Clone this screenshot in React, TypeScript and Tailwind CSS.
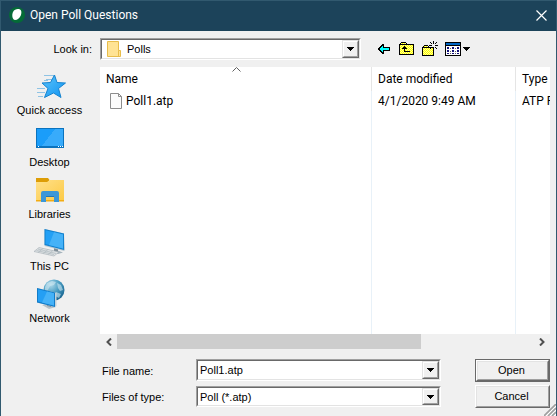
import type { ReactNode } from "react";

const sunken =
  "border border-t-[#a0a0a0] border-l-[#a0a0a0] border-r-white border-b-white";
const sunkenInner =
  "flex h-full items-stretch border border-t-[#696969] border-l-[#696969] border-r-[#e3e3e3] border-b-[#e3e3e3] bg-white";

function DropArrow() {
  return (
    <span
      aria-hidden="true"
      className="w-[17px] shrink-0 border border-t-[#e3e3e3] border-l-[#e3e3e3] border-r-[#696969] border-b-[#696969]"
    >
      <span className="flex h-full items-center justify-center border border-t-white border-l-white border-r-[#a0a0a0] border-b-[#a0a0a0] bg-[#f0f0f0]">
        <svg width="7" height="4" viewBox="0 0 7 4" shapeRendering="crispEdges">
          <path d="M0 0h7v1H6v1H5v1H4v1H3V3H2V2H1V1H0z" />
        </svg>
      </span>
    </span>
  );
}

function Combo({ children, className }: { children: ReactNode; className: string }) {
  return (
    <div className={`${sunken} ${className}`}>
      <div className={sunkenInner}>
        {children}
        <DropArrow />
      </div>
    </div>
  );
}

function StarIcon() {
  return (
    <svg width="32" height="32" viewBox="1 0 32 32">
      <defs>
        <linearGradient id="star" x1="0" y1="0" x2="1" y2="1">
          <stop offset="0" stopColor="#5cc4fa" />
          <stop offset="1" stopColor="#0f93f2" />
        </linearGradient>
      </defs>
      <path d="M11 4.500h10M13 8.500h6M4 17.500h8M4 21.500h8M11 9.500h4M5 25.500h5" stroke="#8fc3e4" strokeWidth="1" />
      <path d="M21.500 4l2.500 7.500 8.500.5-7 5.500 2.500 9-7.500-4.500-9 4.500 3.500-9L9 12l8.500-.5z" fill="url(#star)" stroke="#1583cf" strokeWidth="1" />
    </svg>
  );
}

function DesktopIcon() {
  return (
    <svg width="32" height="32" viewBox="0 0 32 32" shapeRendering="crispEdges">
      <rect x="2" y="5" width="28" height="20" fill="#0b73be" />
      <rect x="3" y="6" width="26" height="17" fill="#1a9dfa" />
      <path d="M21 6h8v17H8z" fill="#38abfb" />
      <path d="M4 23h1v1H4zM24 23h1v1h-1zM26 23h1v1h-1zM28 23h1v1h-1z" fill="#fff" />
    </svg>
  );
}

function LibrariesIcon() {
  return (
    <svg width="32" height="32" viewBox="0 0 32 32">
      <defs>
        <linearGradient id="lib" x1="0" y1="0" x2="1" y2="1">
          <stop offset="0" stopColor="#ffe08a" />
          <stop offset="1" stopColor="#fcca45" />
        </linearGradient>
      </defs>
      <path d="M2 3h12l1.500 2-2 3H2z" fill="#dd9d06" />
      <path d="M2 7h11l3-2h14v21H2z" fill="url(#lib)" />
      <path d="M2 25h28v1.500H2z" fill="#f3ac13" />
      <path d="M7 18q0-2 2-2h14q2 0 2 2v9h-5v-6h-8v6H7z" fill="#3b97d8" />
      <path d="M12 21h8v1h-8z" fill="#2375b4" />
    </svg>
  );
}

function ComputerIcon() {
  return (
    <svg width="32" height="32" viewBox="0 0 32 32">
      <path d="M14 22.500l5 1.500 3-1 3 1 4 1.500-5 1.500-7-2z" fill="#a5b4bd" />
      <path d="M20 20l4 1v4h-4z" fill="#7c8b95" />
      <path d="M10.500 2L30 6.500 31 23l-1 1-19.500-5z" fill="#b9c9d2" />
      <path d="M10.500 2L30 6.500V23l-19.500-5z" fill="#1382cf" />
      <path d="M11.500 3.300L29 7.400v14.200l-17.500-4.500z" fill="#23a0f5" />
      <path d="M20 5.300l9 2.100v14.200l-14-3.600z" fill="#45b2f8" />
      <path d="M5 20.500l20 4.500-5 4L0 24.500z" fill="#dfe3e5" stroke="#a2adb4" strokeWidth=".6" />
      <path d="M4 22l18 4.500M2.500 23.500L20 27.500M9 21.500l-5 4M14 22.500l-5 4M19 23.500l-5 4" stroke="#b3bcc1" strokeWidth=".8" />
    </svg>
  );
}

function NetworkIcon() {
  return (
    <svg width="32" height="32" viewBox="0 0 32 32">
      <defs>
        <radialGradient id="globe" cx=".35" cy=".25" r=".8">
          <stop offset="0" stopColor="#b0d9e9" />
          <stop offset=".5" stopColor="#4c9fc4" />
          <stop offset="1" stopColor="#17638f" />
        </radialGradient>
      </defs>
      <circle cx="20" cy="11" r="10.500" fill="url(#globe)" />
      <path d="M13 4l5-2 4 1-2 3-4 1-2 4-3 1 0-4zM23 4l4 2 2 5-3 1-2-3zM22 13l5 2-2 4-4-2z" fill="#cfe8f1" opacity=".6" />
      <path d="M8 26l6-1 8 3-7 2z" fill="#b7c2c9" />
      <path d="M13 23l4 1v4l-4-1z" fill="#82929c" />
      <path d="M3 9l18 4.500 1.500.5v13L21 28 3 23.500z" fill="#c3d0d7" />
      <path d="M3 9l18 4.500V28L3 23.500z" fill="#127cc8" />
      <path d="M4 10.300l16 4v12.300l-16-4z" fill="#249ff4" />
      <path d="M13 12.500l7 1.800v12.300L8 23.600z" fill="#45b2f8" />
    </svg>
  );
}

const places = [
  { name: "Quick access", icon: <StarIcon /> },
  { name: "Desktop", icon: <DesktopIcon /> },
  { name: "Libraries", icon: <LibrariesIcon /> },
  { name: "This PC", icon: <ComputerIcon /> },
  { name: "Network", icon: <NetworkIcon /> },
];

function Toolbar() {
  return (
    <div className="flex items-center gap-[7px] pl-[15px]">
      <button type="button" aria-label="Back">
        <svg width="16" height="16" viewBox="0 0 16 16" shapeRendering="crispEdges">
          <path d="M6 3h2v3h6v4H8v3H6v-1H5v-1H4v-1H3V9H2V7h1V6h1V5h1V4h1z" fill="#000" />
          <path d="M6 5h1v2h6v2H7v2H6v-1H5V9H4V7h1V6h1z" fill="#00ffff" />
        </svg>
      </button>
      <button type="button" aria-label="Up one level">
        <svg width="16" height="16" viewBox="0 0 16 16" shapeRendering="crispEdges">
          <defs>
            <pattern id="dither" width="2" height="2" patternUnits="userSpaceOnUse">
              <rect width="2" height="2" fill="#ffff00" />
              <path d="M0 0h1v1H0zM1 1h1v1H1z" fill="#ffff9a" />
            </pattern>
          </defs>
          <path d="M2 1h5v1h1v1h7v11H0V3h1V2h1z" fill="#000" />
          <path d="M2 2h5v1H2zM1 4h13v9H1z" fill="url(#dither)" />
          <path d="M5 5h1v1h1v1h1v1H6v2h5v1H5V8H3V7h1V6h1z" fill="#000" />
        </svg>
      </button>
      <button type="button" aria-label="Create new folder">
        <svg width="16" height="16" viewBox="0 0 16 16" shapeRendering="crispEdges">
          <path d="M2 4h4v1h1v1h5v9H0V6h1V5h1z" fill="#000" />
          <path d="M2 5h4v1H2zM1 7h10v7H1z" fill="url(#dither)" />
          <path d="M11 0h1v3h-1zM11 7h1v3h-1zM7 4h3v1H7zM13 4h3v1h-3zM8 1h1v1H8zM9 2h1v1H9zM14 1h1v1h-1zM13 2h1v1h-1zM9 6h1v1H9zM8 7h1v1H8zM13 6h1v1h-1zM14 7h1v1h-1z" fill="#000" />
        </svg>
      </button>
      <button type="button" aria-label="View menu">
        <svg width="25" height="16" viewBox="0 0 25 16" shapeRendering="crispEdges">
          <rect y="1" width="16" height="14" fill="#000" />
          <rect x="1" y="2" width="14" height="2" fill="#0065c4" />
          <rect x="1" y="5" width="14" height="9" fill="#fff" />
          <path d="M2 6h2v2H2zM7 6h2v2H7zM12 6h2v2h-2zM2 9h2v2H2zM7 9h2v2H7zM12 9h2v2h-2zM2 12h2v1H2zM7 12h2v1H7zM12 12h2v1h-2z" fill="#101078" />
          <path d="M5 7h1v1H5zM10 7h1v1h-1zM5 10h1v1H5zM10 10h1v1h-1zM5 12h1v1H5zM10 12h1v1h-1z" fill="#606060" />
          <path d="M18 6h7v1h-1v1h-1v1h-1v1h-1V9h-1V8h-1V7h-1z" fill="#000" />
        </svg>
      </button>
    </div>
  );
}

function FileTable() {
  const head = "h-6 border-r border-[#e5e5e5] p-0 pl-1.5 text-left font-normal";
  const cell = "h-5 border-r border-[#e8f1f8] p-0 pl-1.5";
  return (
    <table className="w-full table-fixed border-separate border-spacing-0 overflow-hidden font-[Roboto,'Liberation_Sans',sans-serif] text-xs leading-4 whitespace-nowrap">
      <colgroup>
        <col className="w-[272px]" />
        <col className="w-36" />
        <col />
      </colgroup>
      <thead>
        <tr>
          <th className={`${head} relative`}>
            Name
            <svg className="absolute top-0 left-1/2 -translate-x-1" width="9" height="5" viewBox="0 0 9 5">
              <path d="M.5 4.500l4-4 4 4" fill="none" stroke="#606060" />
            </svg>
          </th>
          <th className={head}>Date modified</th>
          <th className="p-0 pl-1.5 text-left font-normal">Type</th>
        </tr>
      </thead>
      <tbody>
        <tr>
          <td className={cell}>
            <span className="flex items-center gap-1 pl-1">
              <svg width="12" height="16" viewBox="0 0 12 16">
                <path d="M.5.5h8l3 3v12H.5z" fill="#fbfbfb" stroke="#8c8c8c" />
                <path d="M8.500.5v3h3" fill="none" stroke="#8c8c8c" />
              </svg>
              Poll1.atp
            </span>
          </td>
          <td className={cell}>4/1/2020 9:49 AM</td>
          <td className="overflow-hidden p-0 pl-1.5 text-clip">ATP File</td>
        </tr>
        <tr aria-hidden="true">
          <td className="border-r border-[#e8f1f8] p-0" />
          <td className="border-r border-[#e8f1f8] p-0" />
          <td className="p-0" />
        </tr>
      </tbody>
    </table>
  );
}

export default function App() {
  const field =
    "min-w-0 flex-1 appearance-none bg-white p-0 pl-0.5 leading-4 text-black outline-none";
  return (
    <div className="flex min-h-screen flex-col bg-[#f0f0f0] font-['Liberation_Sans',Arial,sans-serif] text-[11px] leading-[14px] text-black">
      <header className="flex h-[31px] items-center border border-b-0 border-[#31596f] bg-[#1c435a] pr-[9px] pb-0.5 pl-2 text-white">
        <svg width="16" height="16" viewBox="0 0 16 16">
          <circle cx="8" cy="8" r="8" fill="#056b37" />
          <path d="M4 5C5.500 2 9 1.500 11 2.500s1.500 4.500.5 6.500-3 4-5.500 4S2.500 8 4 5z" fill="#fff" />
        </svg>
        <h1 className="flex-1 pl-[5px] font-[Roboto,'Liberation_Sans',sans-serif] text-xs font-normal">
          Open Poll Questions
        </h1>
        <button type="button" aria-label="Close">
          <svg width="11" height="11" viewBox="0 0 11 11">
            <path d="M.5.5l10 10M10.500.5l-10 10" stroke="#fff" strokeWidth="1.200" />
          </svg>
        </button>
      </header>

      <main className="flex flex-1 flex-col border-x border-l-[#31596f] border-r-[#31596f] pt-[7px]">
        <div className="flex h-[22px] items-center">
          <label htmlFor="look-in" className="w-[99px] shrink-0 pr-2 text-right">
            Look in:
          </label>
          <Combo className="h-[22px] max-w-[261px] flex-1">
            <svg className="ml-[5px] mr-1 shrink-0 self-center" width="14" height="16" viewBox="0 0 14 16">
              <path d="M.5.500h11v9h2v6H.5z" fill="#ffe394" stroke="#e8bd4b" />
              <path d="M11.500 9.500v6" stroke="#e8bd4b" />
            </svg>
            <select id="look-in" className={field}>
              <option>Polls</option>
            </select>
          </Combo>
          <Toolbar />
        </div>

        <div className="flex flex-1 pt-[7px] pr-1.5">
          <nav className="flex w-[99px] shrink-0 flex-col gap-1.5 pt-1 pr-0.5">
            {places.map((p) => (
              <button key={p.name} type="button" className="flex flex-col items-center">
                {p.icon}
                {p.name}
              </button>
            ))}
          </nav>

          <div className="flex min-w-0 flex-1 flex-col">
            <div className="flex flex-1 overflow-hidden bg-white">
              <FileTable />
            </div>
            <div className="flex h-[15px]">
              <button type="button" aria-label="Scroll left" className="flex w-[17px] items-center justify-center">
                <svg width="6" height="8" viewBox="0 0 6 8">
                  <path d="M5 .5L1.500 4 5 7.500" fill="none" stroke="#505050" strokeWidth="2" />
                </svg>
              </button>
              <div className="flex-1">
                <div className="h-full w-[73%] bg-[#cdcdcd]" />
              </div>
              <button type="button" aria-label="Scroll right" className="flex w-[17px] items-center justify-center">
                <svg width="6" height="8" viewBox="0 0 6 8">
                  <path d="M1 .5L4.500 4 1 7.500" fill="none" stroke="#505050" strokeWidth="2" />
                </svg>
              </button>
            </div>

            <form className="flex flex-col gap-[3px] pt-2.5 pb-2">
              <div className="flex h-[23px] items-center">
                <label htmlFor="file-name" className="w-24 shrink-0 pl-0.5">
                  File name:
                </label>
                <Combo className="h-[22px] flex-1 self-start">
                  <input id="file-name" type="text" defaultValue="Poll1.atp" className={field} />
                </Combo>
                <button
                  type="button"
                  className="ml-[34px] h-[23px] w-[75px] border border-[#696969]"
                >
                  <span className="flex h-full items-center justify-center border border-t-white border-l-white border-r-[#696969] border-b-[#696969]">
                    <span className="flex h-full w-full items-center justify-center border border-t-[#e3e3e3] border-l-[#e3e3e3] border-r-[#a0a0a0] border-b-[#a0a0a0] pr-0.5 pb-0.5">
                      Open
                    </span>
                  </span>
                </button>
              </div>
              <div className="flex h-[23px] items-center">
                <label htmlFor="file-type" className="w-24 shrink-0 pl-0.5">
                  Files of type:
                </label>
                <Combo className="h-[21px] flex-1">
                  <select id="file-type" className={field}>
                    <option>Poll (*.atp)</option>
                  </select>
                </Combo>
                <button
                  type="button"
                  className="ml-[34px] h-[23px] w-[75px] border border-t-white border-l-white border-r-[#696969] border-b-[#696969]"
                >
                  <span className="flex h-full items-center justify-center border border-t-[#e3e3e3] border-l-[#e3e3e3] border-r-[#a0a0a0] border-b-[#a0a0a0] pr-0.5 pb-0.5">
                    Cancel
                  </span>
                </button>
              </div>
            </form>
          </div>
        </div>
      </main>
      <svg className="fixed right-px bottom-0" width="12" height="12" viewBox="0 0 12 12" aria-hidden="true">
        <path d="M0 12L12 0M4 12l8-8M8 12l4-4" stroke="#a0a0a0" strokeWidth="1.600" />
        <path d="M2 12L12 2M6 12l6-6M10 12l2-2" stroke="#fff" />
      </svg>
    </div>
  );
}
